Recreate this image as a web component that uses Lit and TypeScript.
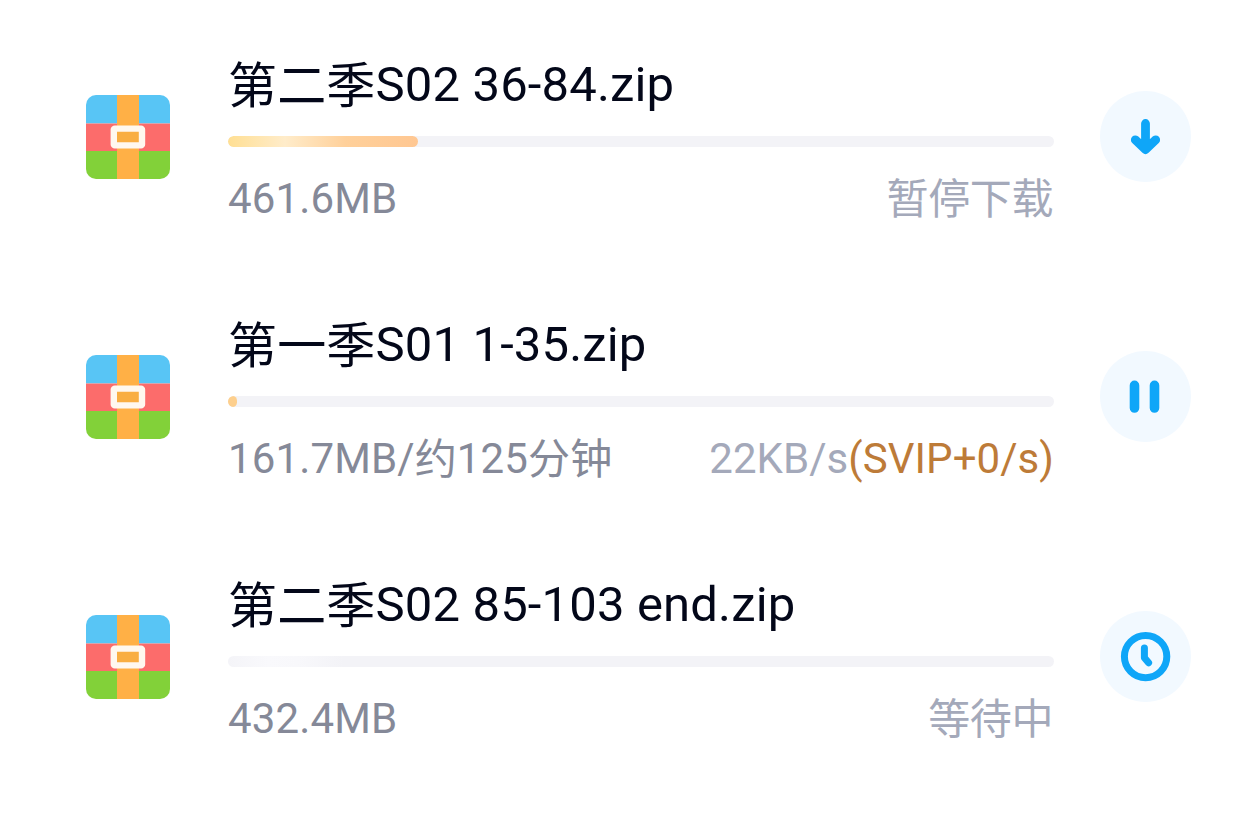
// app.ts
import { css, html, LitElement, svg } from 'lit';
import { customElement, property } from 'lit/decorators.js';

type Status = 'paused' | 'running' | 'waiting';

interface Download {
  name: string;
  info: string;
  speed: string;
  bonus: string;
  percent: number;
  status: Status;
}

const DOWNLOADS: Download[] = [
  { name: '第二季S02 36-84.zip', info: '461.6MB', speed: '暂停下载', bonus: '', percent: 23, status: 'paused' },
  { name: '第一季S01 1-35.zip', info: '161.7MB/约125分钟', speed: '22KB/s', bonus: '(SVIP+0/s)', percent: 1.1, status: 'running' },
  { name: '第二季S02 85-103 end.zip', info: '432.4MB', speed: '等待中', bonus: '', percent: 0, status: 'waiting' },
];

const GLYPHS = {
  paused: svg`<path d="M45.5 32.5V58M35.3 48.8L45.5 58.5L55.7 48.8" />`,
  running: svg`<path d="M34.5 34.4V57M54.5 34.4V57" />`,
  waiting: svg`<circle cx="45.6" cy="45.6" r="21.2" /><path d="M44.4 37V46.8L48.6 51.8" />`,
};

// Han characters sit slightly lower than the latin baseline
const mixed = (text: string) =>
  text.split(/([\u4e00-\u9fff]+)/).map((part, i) => (i % 2 ? html`<span class="han">${part}</span>` : part));

@customElement('zip-icon')
export class ZipIcon extends LitElement {
  static styles = css`
      :host {
          display: block;
          width: 84px;
          height: 84px;
          border-radius: 10px;
          overflow: hidden;
      }

      svg {
          display: block;
      }
  `;

  render() {
    return html`
      <svg width="84" height="84" viewBox="0 0 84 84">
        <rect width="84" height="28.5" fill="#58c5f5" />
        <rect y="28.5" width="84" height="28" fill="#fc6c6b" />
        <rect y="56" width="84" height="28" fill="#82d139" />
        <rect x="31" width="22" height="84" fill="#ffb046" />
        <rect x="27.8" y="33.6" width="28.2" height="16.8" rx="1" fill="#f9ae42" stroke="#fff8ef" stroke-width="6.4" stroke-linejoin="round" />
      </svg>
    `;
  }
}

@customElement('download-item')
export class DownloadItem extends LitElement {
  @property({ attribute: false })
  item!: Download;

  static styles = css`
      :host {
          display: flex;
          height: 260px;
          padding: 0 49px 0 86px;
          box-sizing: border-box;
      }

      zip-icon {
          flex: none;
          margin-top: 95px;
      }

      .body {
          flex: none;
          width: 826px;
          margin-left: 58px;
          padding-top: 53px;
      }

      .name {
          height: 64px;
          line-height: 64px;
          font-size: 49px;
          letter-spacing: 0.16px;
          color: #030719;
          white-space: nowrap;
      }

      .han {
          line-height: 0;
          vertical-align: -1px;
      }

      .name .han {
          vertical-align: -2px;
      }

      .track {
          height: 11px;
          margin-top: 19px;
          border-radius: 6px;
          background: #f3f3f7;
          overflow: hidden;
      }

      .waiting .track {
          background: linear-gradient(90deg, #f4f4f8, #f9f9fc 40px, #f8f8fb 70px, #f3f3f7 115px);
      }

      .fill {
          height: 100%;
          border-radius: 6px;
          background: linear-gradient(90deg, #ffdf93, #ffecca 30%, #ffd09a 62%, #ffc792);
      }

      .running .fill {
          background: #fdcf8d;
      }

      .meta {
          display: flex;
          justify-content: space-between;
          height: 56px;
          margin-top: 24px;
          line-height: 56px;
          font-size: 42px;
          letter-spacing: 0.13px;
          color: #858998;
          white-space: nowrap;
      }

      .speed {
          margin-right: 1px;
          letter-spacing: -0.4px;
          color: #a4a9ba;
      }

      .running .speed {
          margin-right: 0;
          letter-spacing: 0.06px;
      }

      .bonus {
          color: #bd7b38;
      }

      .action {
          display: block;
          flex: none;
          width: 91px;
          height: 91px;
          margin: 91px 0 0 46px;
          padding: 0;
          border: 0;
          border-radius: 50%;
          background: #f2f9ff;
      }

      .action svg {
          display: block;
          fill: none;
          stroke: #0fa6f8;
          stroke-width: 8.8;
          stroke-linecap: round;
          stroke-linejoin: round;
      }

      .action.running svg {
          stroke-width: 9.6;
      }

      .action.waiting svg {
          stroke-width: 7;
      }
  `;

  render() {
    const { name, info, speed, bonus, percent, status } = this.item;
    return html`
      <zip-icon></zip-icon>
      <div class="body ${status}">
        <div class="name">${mixed(name)}</div>
        <div class="track">
          <div class="fill" style="width: ${percent}%"></div>
        </div>
        <div class="meta">
          <span>${mixed(info)}</span>
          <span class="speed">${mixed(speed)}<span class="bonus">${bonus}</span></span>
        </div>
      </div>
      <button class="action ${status}">
        <svg width="91" height="91" viewBox="0 0 91 91">${GLYPHS[status]}</svg>
      </button>
    `;
  }
}

@customElement('app-root')
export class AppRoot extends LitElement {
  static styles = css`
      :host {
          display: block;
          height: 814px;
          overflow: hidden;
          background: #fff;
          font-family: Roboto, "Noto Sans CJK SC", sans-serif;
      }
  `;

  render() {
    return html`${DOWNLOADS.map((item) => html`<download-item .item=${item}></download-item>`)}`;
  }
}
